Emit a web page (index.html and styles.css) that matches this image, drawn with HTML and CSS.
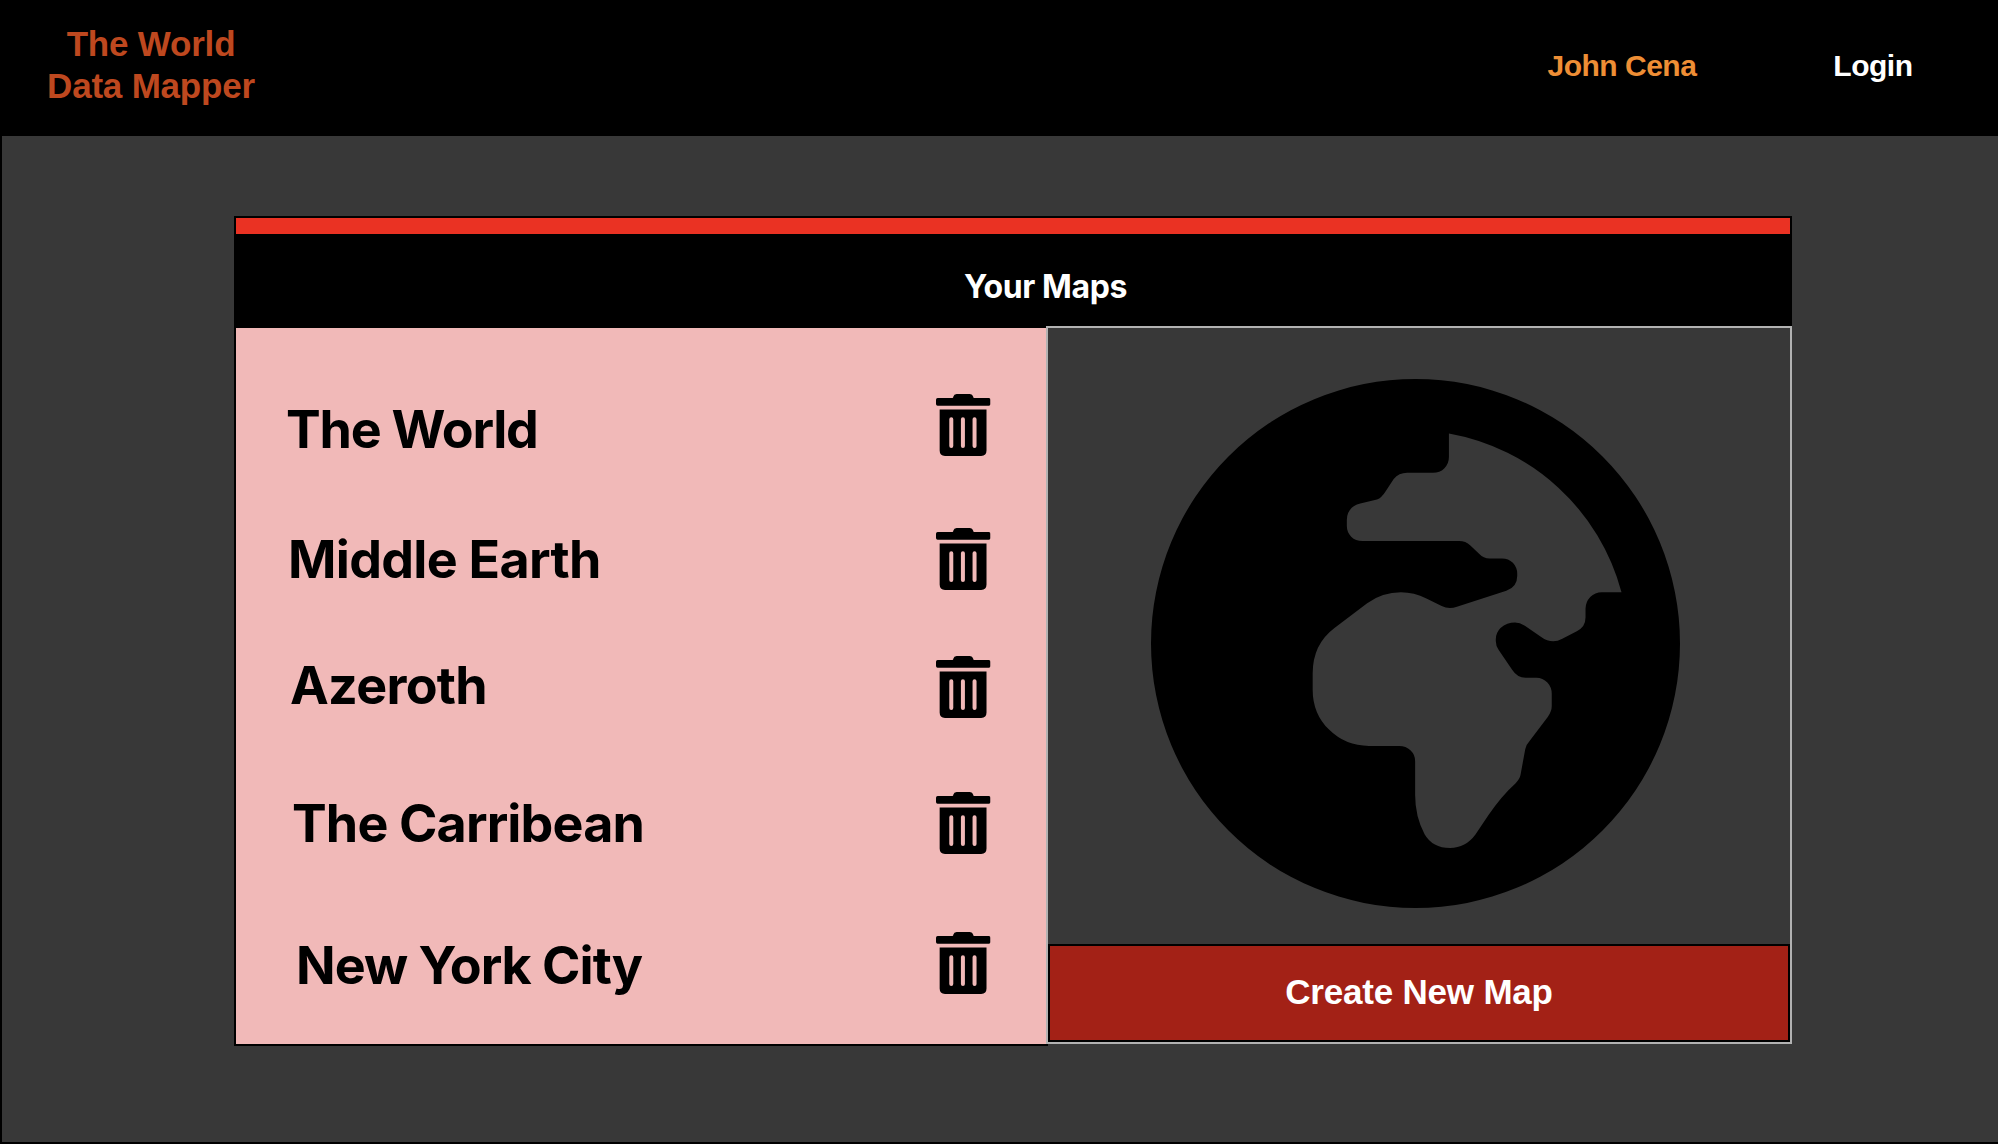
FILE: index.html
```html
<!DOCTYPE html>
<html lang="en">
<head>
<meta charset="utf-8">
<title>The World Data Mapper</title>
<link rel="stylesheet" href="styles.css">
</head>
<body>
<svg class="defs" width="0" height="0" aria-hidden="true">
  <symbol id="trash" viewBox="0 0 164 186">
    <path fill-rule="evenodd" d="M5 12H49Q52 12 52 8Q54 0 62 0H102Q110 0 112 8Q112 12 115 12H159Q164 12 164 17V30Q164 35 159 35H5Q0 35 0 30V17Q0 12 5 12ZM11 46H152V170Q152 186 136 186H27Q11 186 11 170ZM40 76V156a6 6 0 0 0 12 0V76a6 6 0 0 0-12 0ZM75 76V156a6 6 0 0 0 12 0V76a6 6 0 0 0-12 0ZM110 76V156a6 6 0 0 0 12 0V76a6 6 0 0 0-12 0Z"/>
  </symbol>
</svg>
<header class="topbar">
  <h1 class="brand">The World<br>Data Mapper</h1>
  <nav class="links">
    <a class="user">John Cena</a>
    <a class="login">Login</a>
  </nav>
</header>
<main class="page">
  <section class="card">
    <div class="strip"></div>
    <h2 class="title">Your Maps</h2>
    <div class="columns">
      <ul class="maps">
        <li class="map world"><span>The World</span><svg class="trash"><use href="#trash"/></svg></li>
        <li class="map middle"><span>Middle Earth</span><svg class="trash"><use href="#trash"/></svg></li>
        <li class="map azeroth"><span>Azeroth</span><svg class="trash"><use href="#trash"/></svg></li>
        <li class="map carribean"><span>The Carribean</span><svg class="trash"><use href="#trash"/></svg></li>
        <li class="map city"><span>New York City</span><svg class="trash"><use href="#trash"/></svg></li>
      </ul>
      <div class="side">
        <svg class="globe" viewBox="60 50 1456 1456">
          <path fill-rule="evenodd" d="M788 50A728 728 0 1 1 788 1506A728 728 0 1 1 788 50ZM880 200V264Q880 284 867 296Q855 308 836 308H765Q742 308 728 325L705 360Q695 376 682 382L636 393Q599 403 599 438V454Q599 472 611 484Q623 496 642 496H908Q926 496 939 508L963 531Q975 544 992 544H1026Q1044 544 1056 556Q1068 569 1068 586V592Q1068 622 1038 633L902 677Q880 685 860 675L818 654Q784 637 748 637Q697 637 655 667L565 735Q505 780 505 860V905Q505 971 550 1015Q595 1060 660 1060H743Q762 1060 774 1072Q787 1084 787 1102V1195Q787 1254 813 1303Q835 1341 883 1341Q926 1341 953 1304L989 1250Q1025 1197 1063 1163Q1075 1151 1077 1140L1090 1069Q1092 1057 1103 1045L1152 980Q1163 965 1163 950V916Q1163 898 1151 885Q1138 872 1121 872H1091Q1068 872 1054 850L1017 796Q1009 785 1009 771V766Q1009 748 1022 735Q1040 720 1062 720Q1075 720 1089 729L1134 760Q1163 781 1192 765L1232 744Q1256 733 1256 706V682Q1256 664 1269 650Q1282 637 1301 637H1355A600 600 0 0 0 880 200Z"/>
        </svg>
        <button class="create">Create New Map</button>
      </div>
    </div>
  </section>
</main>
</body>
</html>
```
FILE: styles.css
```css
* { box-sizing: border-box; margin: 0; padding: 0; }
body {
  display: flex;
  flex-direction: column;
  width: 1998px;
  height: 1144px;
  background: #000;
  font-family: "Liberation Sans", Arial, sans-serif;
  font-weight: 700;
}
.defs { position: absolute; }
.topbar {
  display: flex;
  justify-content: space-between;
  height: 136px;
  padding: 23px 85.5px 0 46px;
}
.brand {
  width: 210px;
  font-size: 35px;
  line-height: 42px;
  letter-spacing: -0.2px;
  text-align: center;
  white-space: nowrap;
  color: #be481f;
}
.links {
  display: flex;
  gap: 137px;
  padding-top: 26px;
  font-size: 30px;
  line-height: 34px;
  letter-spacing: -0.5px;
}
.user { color: #ee8e35; }
.login { color: #fff; }
.page {
  flex: 1;
  margin: 0 0 2px 2px;
  padding: 80px 0 0 232px;
  background: #383838;
}
.card { width: 1558px; }
.strip {
  height: 20px;
  border: 2px solid #000;
  background: #ea3223;
}
.title {
  height: 90px;
  padding: 31px 0 0 65px;
  background: #000;
  color: #fff;
  font: 700 32px/40px Inter, sans-serif;
  letter-spacing: -0.4px;
  text-align: center;
}
.columns { display: flex; }
.maps {
  width: 814px;
  height: 720px;
  border: solid #000;
  border-width: 2px 0 2px 2px;
  background: #f1b9b8;
  list-style: none;
  font: 700 52px/64px Inter, sans-serif;
}
.map {
  display: flex;
  justify-content: space-between;
  height: 64px;
  padding-right: 57.5px;
}
.trash { width: 54.5px; height: 62px; }
.world { padding-left: 50px; margin-top: 66px; letter-spacing: -1.2px; }
.world span { margin-top: 4px; }
.middle { padding-left: 52px; margin-top: 70px; letter-spacing: -0.7px; }
.azeroth { padding-left: 54px; margin-top: 64px; letter-spacing: -0.7px; }
.azeroth span { margin-top: -2px; }
.carribean { padding-left: 56px; margin-top: 72px; letter-spacing: -0.85px; }
.city { padding-left: 60px; margin-top: 76px; letter-spacing: -1px; }
.city span { margin-top: 2px; }
.side {
  display: flex;
  flex-direction: column;
  justify-content: space-between;
  width: 746px;
  height: 718px;
  margin-left: -2px;
  border: 2px solid #b2b2b2;
  background: #383838;
}
.globe { width: 529px; height: 529px; margin: 50.6px 0 0 103.4px; }
.create {
  height: 98px;
  padding-bottom: 2px;
  border: 2px solid #000;
  background: #a32116;
  color: #fff;
  font: 700 35px/40px "Liberation Sans", Arial, sans-serif;
  letter-spacing: -0.2px;
}
```
